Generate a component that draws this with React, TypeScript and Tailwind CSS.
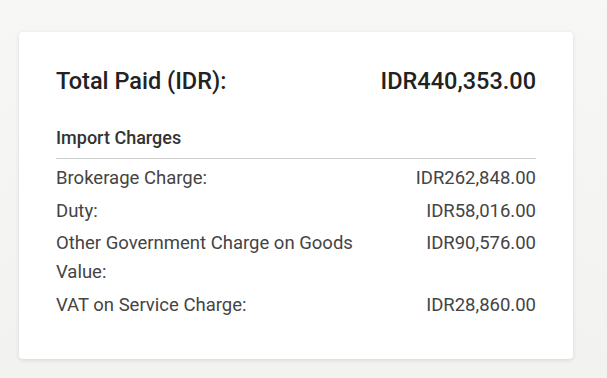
import React from 'react';

interface ChargeLine {
  label: string;
  amount: string;
}

const charges: ChargeLine[] = [
  { label: 'Brokerage Charge:', amount: 'IDR262,848.00' },
  { label: 'Duty:', amount: 'IDR58,016.00' },
  { label: 'Other Government Charge on Goods Value:', amount: 'IDR90,576.00' },
  { label: 'VAT on Service Charge:', amount: 'IDR28,860.00' },
];

const App: React.FC = () => {
  return (
    <div
      className="min-h-screen w-full bg-gradient-to-b from-[#f7f7f6] to-[#f2f2f1] pt-[32px] pl-[19px] pr-[34px]"
      style={{ fontFamily: 'Roboto, "Noto Sans", sans-serif' }}
    >
      <div className="bg-white rounded-[4px] shadow-[0_1px_4px_rgba(0,0,0,0.12)] px-[37px] pt-[34px] pb-[39px]">
        {/* total */}
        <div className="flex items-center justify-between text-[23.5px] font-medium text-[#222] leading-[30px]">
          <span>Total Paid (IDR):</span>
          <span>IDR440,353.00</span>
        </div>

        {/* breakdown */}
        <div className="mt-[30px]">
          <div className="text-[18px] font-medium text-[#333] leading-[24px] pb-[8px] border-b border-[#cfcfcf]">
            Import Charges
          </div>
          <div className="flex flex-col gap-[3.5px] mt-[5px]">
            {charges.map((c) => (
              <div
                key={c.label}
                className="grid grid-cols-[310px_1fr] text-[18.5px] text-[#444] leading-[29px]"
              >
                <span>{c.label}</span>
                <span className="text-right">{c.amount}</span>
              </div>
            ))}
          </div>
        </div>
      </div>
    </div>
  );
};

export default App;
